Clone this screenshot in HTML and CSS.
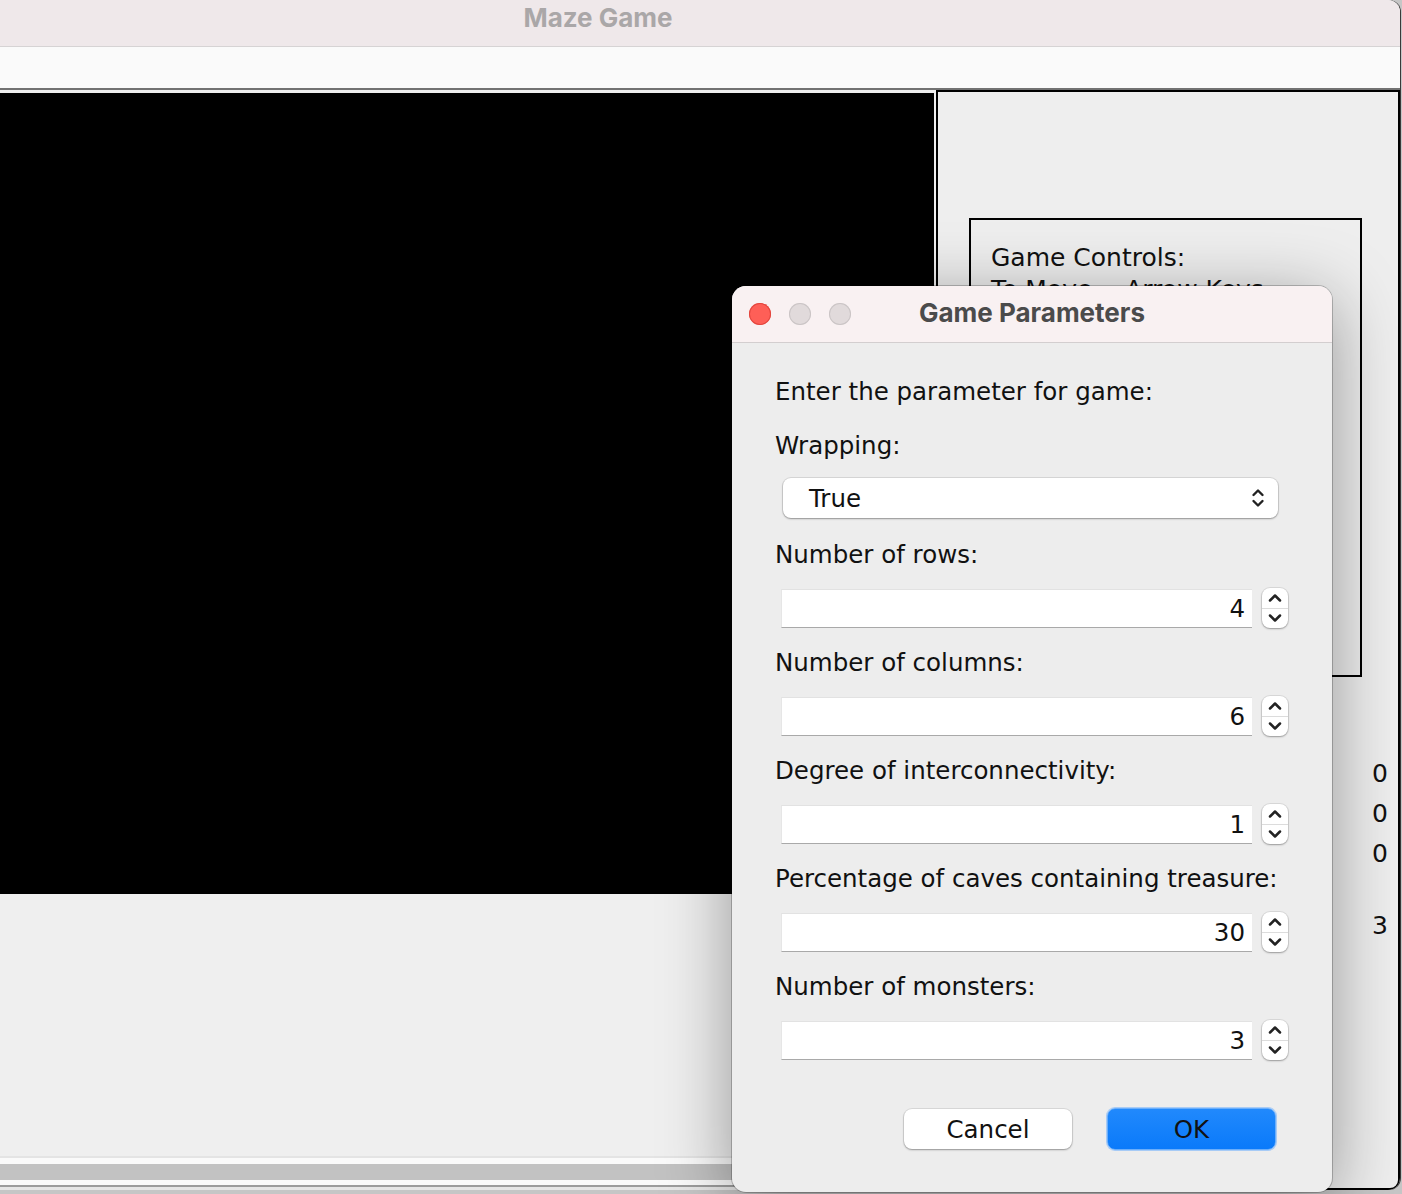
FILE: index.html
```html
<!DOCTYPE html>
<html>
<head>
<meta charset="utf-8">
<title>Maze Game</title>
<link rel="stylesheet" href="styles.css">
</head>
<body>
<div class="window">
  <div class="titlebar"><span class="wtitle">Maze Game</span></div>
  <div class="toolbar"></div>
  <div class="content">
    <div class="left">
      <div class="canvas"></div>
      <div class="filler"></div>
      <div class="hscroll">
        <div class="hs-line1"></div>
        <div class="hs-gap1"></div>
        <div class="hs-track"></div>
        <div class="hs-gap2"></div>
        <div class="hs-line2"></div>
        <div class="hs-gap3"></div>
      </div>
    </div>
    <div class="right">
      <div class="controls">
        <p>Game Controls:</p>
        <p>To Move -&nbsp;&nbsp;Arrow Keys</p>
      </div>
      <div class="stats">
        <div class="stat">0</div>
        <div class="stat">0</div>
        <div class="stat">0</div>
        <div class="stat stat-gap">3</div>
      </div>
    </div>
  </div>
</div>

<div class="dialog">
  <div class="dtitlebar">
    <div class="lights">
      <span class="light red"></span>
      <span class="light gray"></span>
      <span class="light gray"></span>
    </div>
    <div class="dtitle">Game Parameters</div>
    <div></div>
  </div>
  <div class="dbody">
    <div class="lbl first">Enter the parameter for game:</div>
    <div class="lbl wrap">Wrapping:</div>
    <div class="select">
      <span>True</span>
      <svg class="sel-chev" width="16" height="24" viewBox="0 0 16 24"><path d="M3.5 9 L8 4.5 L12.5 9" fill="none" stroke="#222" stroke-width="2.4" stroke-linecap="round" stroke-linejoin="round"/><path d="M3.5 15 L8 19.5 L12.5 15" fill="none" stroke="#222" stroke-width="2.4" stroke-linecap="round" stroke-linejoin="round"/></svg>
    </div>

    <div class="lbl">Number of rows:</div>
    <div class="frow"><div class="field">4</div><div class="spin"><div class="sp-up"><svg width="16" height="12" viewBox="0 0 16 12"><path d="M3 8.5 L8 3.5 L13 8.5" fill="none" stroke="#222" stroke-width="2.5" stroke-linecap="round" stroke-linejoin="round"/></svg></div><div class="sp-dn"><svg width="16" height="12" viewBox="0 0 16 12"><path d="M3 3.5 L8 8.5 L13 3.5" fill="none" stroke="#222" stroke-width="2.5" stroke-linecap="round" stroke-linejoin="round"/></svg></div></div></div>

    <div class="lbl">Number of columns:</div>
    <div class="frow"><div class="field">6</div><div class="spin"><div class="sp-up"><svg width="16" height="12" viewBox="0 0 16 12"><path d="M3 8.5 L8 3.5 L13 8.5" fill="none" stroke="#222" stroke-width="2.5" stroke-linecap="round" stroke-linejoin="round"/></svg></div><div class="sp-dn"><svg width="16" height="12" viewBox="0 0 16 12"><path d="M3 3.5 L8 8.5 L13 3.5" fill="none" stroke="#222" stroke-width="2.5" stroke-linecap="round" stroke-linejoin="round"/></svg></div></div></div>

    <div class="lbl">Degree of interconnectivity:</div>
    <div class="frow"><div class="field">1</div><div class="spin"><div class="sp-up"><svg width="16" height="12" viewBox="0 0 16 12"><path d="M3 8.5 L8 3.5 L13 8.5" fill="none" stroke="#222" stroke-width="2.5" stroke-linecap="round" stroke-linejoin="round"/></svg></div><div class="sp-dn"><svg width="16" height="12" viewBox="0 0 16 12"><path d="M3 3.5 L8 8.5 L13 3.5" fill="none" stroke="#222" stroke-width="2.5" stroke-linecap="round" stroke-linejoin="round"/></svg></div></div></div>

    <div class="lbl">Percentage of caves containing treasure:</div>
    <div class="frow"><div class="field">30</div><div class="spin"><div class="sp-up"><svg width="16" height="12" viewBox="0 0 16 12"><path d="M3 8.5 L8 3.5 L13 8.5" fill="none" stroke="#222" stroke-width="2.5" stroke-linecap="round" stroke-linejoin="round"/></svg></div><div class="sp-dn"><svg width="16" height="12" viewBox="0 0 16 12"><path d="M3 3.5 L8 8.5 L13 3.5" fill="none" stroke="#222" stroke-width="2.5" stroke-linecap="round" stroke-linejoin="round"/></svg></div></div></div>

    <div class="lbl">Number of monsters:</div>
    <div class="frow"><div class="field">3</div><div class="spin"><div class="sp-up"><svg width="16" height="12" viewBox="0 0 16 12"><path d="M3 8.5 L8 3.5 L13 8.5" fill="none" stroke="#222" stroke-width="2.5" stroke-linecap="round" stroke-linejoin="round"/></svg></div><div class="sp-dn"><svg width="16" height="12" viewBox="0 0 16 12"><path d="M3 3.5 L8 8.5 L13 3.5" fill="none" stroke="#222" stroke-width="2.5" stroke-linecap="round" stroke-linejoin="round"/></svg></div></div></div>

    <div class="buttons">
      <div class="btn cancel">Cancel</div>
      <div class="btn ok">OK</div>
    </div>
  </div>
</div>
</body>
</html>
```

FILE: styles.css
```css
* { box-sizing: border-box; }
html, body {
  margin: 0;
  padding: 0;
}
body {
  width: 1402px;
  height: 1194px;
  overflow: hidden;
  background: #c6c6c6;
  font-family: "DejaVu Sans", "Liberation Sans", sans-serif;
  position: relative;
}
p { margin: 0; }

.window {
  margin-left: -204px;
  width: 1604px;
  height: 1190px;
  background: #efefef;
  border-radius: 12px;
  overflow: hidden;
  display: flex;
  flex-direction: column;
  box-shadow: 1px 0 0 #3a3a3a;
}
.titlebar {
  height: 47px;
  flex-shrink: 0;
  background: #efe8ea;
  border-bottom: 1px solid #d6d3d4;
  display: flex;
  align-items: center;
  justify-content: center;
}
.wtitle {
  font-family: Inter, "Liberation Sans", sans-serif;
  font-weight: 700;
  font-size: 26px;
  color: #aaa7a8;
  margin-top: -12px;
}
.toolbar {
  height: 43px;
  flex-shrink: 0;
  background: #fafafa;
  border-bottom: 2px solid #727272;
}
.content {
  flex: 1;
  display: flex;
  gap: 2px;
  min-height: 0;
}
.left {
  flex: 1;
  display: flex;
  flex-direction: column;
  padding-top: 3px;
  background: #efefef;
}
.canvas {
  height: 801px;
  flex-shrink: 0;
  background: #000;
}
.filler {
  flex: 1;
  background: #efefef;
}
.hscroll { display: flex; flex-direction: column; }
.hs-line1 { height: 2px; background: #e4e4e4; }
.hs-gap1 { height: 6px; background: #fafafa; }
.hs-track { height: 16px; background: #c2c2c2; }
.hs-gap2 { height: 5px; background: #fafafa; }
.hs-line2 { height: 2px; background: #9c9c9c; }
.hs-gap3 { height: 3px; background: #e6e6e6; }

.right {
  width: 464px;
  flex-shrink: 0;
  background: #eeeeee;
  border: 2px solid #000;
  border-bottom-right-radius: 10px;
  padding: 126px 10px 0 31px;
  display: flex;
  flex-direction: column;
}
.controls {
  width: 393px;
  height: 459px;
  flex-shrink: 0;
  border: 2px solid #000;
  padding: 22px 20px;
  font-size: 25px;
  line-height: 32px;
  color: #111;
}
.stats {
  margin-top: 77px;
  font-size: 25px;
  line-height: 40px;
  color: #111;
}
.stat {
  text-align: right;
}
.stat-gap { margin-top: 32px; }

.dialog {
  position: absolute;
  left: 732px;
  top: 286px;
  width: 600px;
  height: 906px;
  border-radius: 14px;
  background: #ededed;
  overflow: hidden;
  box-shadow: 0 0 0 1px rgba(0,0,0,0.22), 0 14px 70px rgba(0,0,0,0.38);
}
.dtitlebar {
  height: 57px;
  background: #f9f1f2;
  border-bottom: 1px solid #d3cecf;
  display: grid;
  grid-template-columns: 1fr auto 1fr;
  align-items: center;
}
.lights {
  display: flex;
  gap: 18px;
  padding-left: 17px;
}
.light {
  width: 22px;
  height: 22px;
  border-radius: 50%;
}
.light.red { background: #fe5f57; box-shadow: inset 0 0 0 1px #e2463f; }
.light.gray { background: #e1dadb; box-shadow: inset 0 0 0 1px #cbc5c6; }
.dtitle {
  font-family: Inter, "Liberation Sans", sans-serif;
  font-weight: 700;
  font-size: 26px;
  color: #4b4b4b;
  margin-top: -3px;
}
.dbody {
  padding: 34px 30px 0 43px;
  display: flex;
  flex-direction: column;
  color: #111;
  font-size: 24.5px;
}
.lbl {
  line-height: 30px;
  height: 30px;
  margin-top: 19px;
  white-space: nowrap;
}
.lbl.first { margin-top: 0; }
.lbl.wrap { margin-top: 24px; }
.select {
  margin-top: 17px;
  margin-left: 8px;
  width: 495px;
  height: 40px;
  flex-shrink: 0;
  background: #fff;
  border-radius: 8px;
  box-shadow: 0 0 0 1px rgba(0,0,0,0.09), 0 1px 2px rgba(0,0,0,0.32);
  display: flex;
  align-items: center;
  justify-content: space-between;
  padding: 0 12px 0 26px;
}
.select + .lbl { margin-top: 22px; }
.frow {
  margin-top: 19px;
  margin-left: 6px;
  height: 40px;
  display: flex;
  gap: 10px;
}
.field {
  width: 471px;
  height: 39px;
  flex-shrink: 0;
  background: #fff;
  border-top: 1px solid #e2e2e2;
  border-left: 1px solid #e6e6e6;
  border-bottom: 1px solid #a9a9a9;
  text-align: right;
  padding-right: 7px;
  line-height: 37px;
}
.spin {
  width: 26px;
  height: 40px;
  flex-shrink: 0;
  margin-top: -1px;
  background: #fff;
  border-radius: 8px;
  box-shadow: 0 0 0 1px rgba(0,0,0,0.08), 0 1px 2px rgba(0,0,0,0.3);
  display: flex;
  flex-direction: column;
}
.sp-up, .sp-dn {
  flex: 1;
  display: flex;
  align-items: center;
  justify-content: center;
}
.sp-up { border-bottom: 1px solid #dcdcdc; padding-top: 1px; }
.sp-dn { padding-bottom: 1px; }
.buttons {
  margin-top: 47px;
  margin-right: 26px;
  display: flex;
  justify-content: flex-end;
  align-items: center;
  gap: 35px;
}
.btn {
  height: 40px;
  border-radius: 8px;
  display: flex;
  align-items: center;
  justify-content: center;
  font-size: 24.5px;
  color: #111;
}
.cancel {
  width: 168px;
  background: #fff;
  box-shadow: 0 0 0 1px rgba(0,0,0,0.08), 0 1px 2px rgba(0,0,0,0.32);
}
.ok {
  width: 169px;
  height: 42px;
  background: linear-gradient(#2189fc, #0a7afa);
  border: 1px solid #6aaefb;
  box-shadow: 0 0 0 1px rgba(120,180,252,0.6);
}
```
